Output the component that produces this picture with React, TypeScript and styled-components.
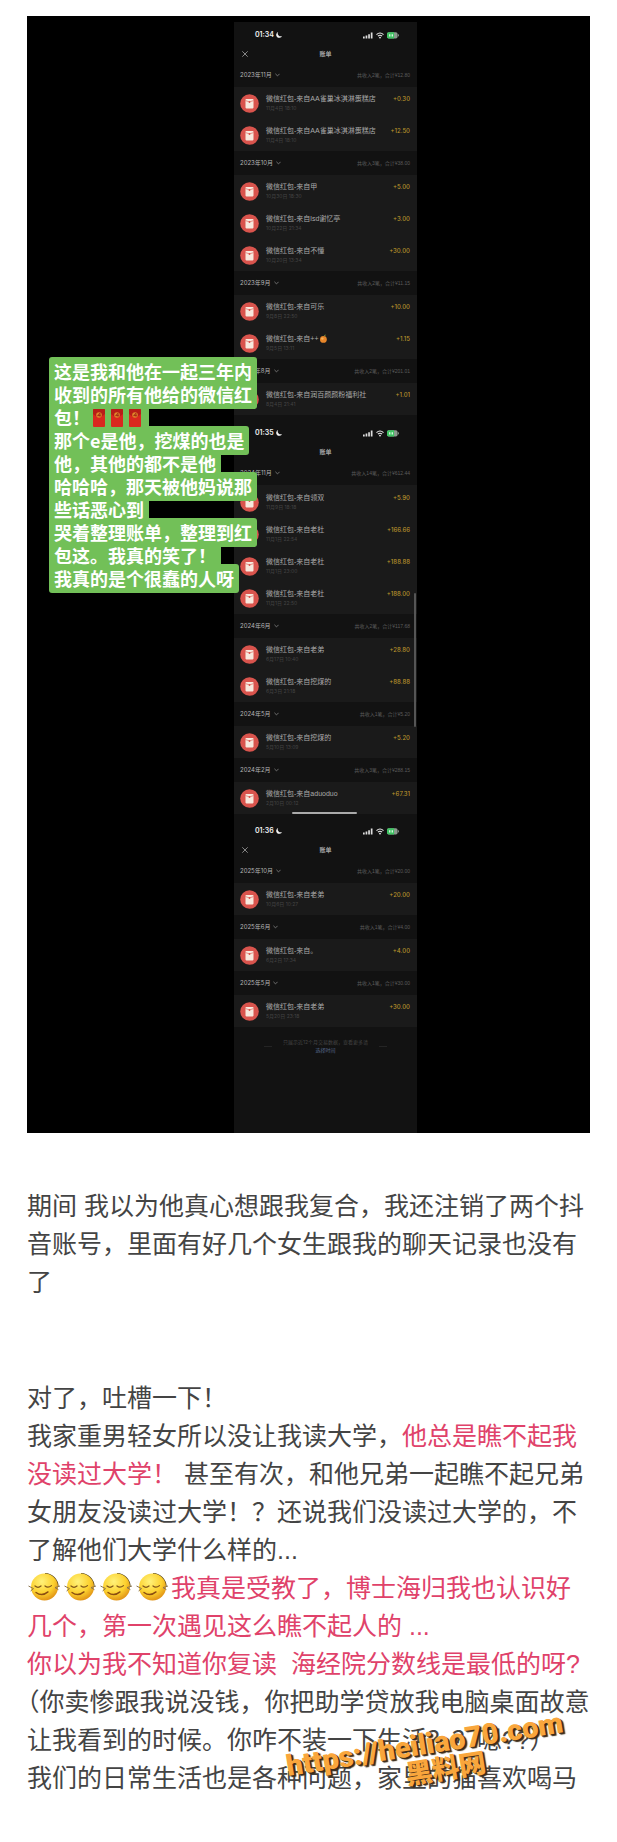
import React from "react";
import styled, { createGlobalStyle } from "styled-components";

const Global = createGlobalStyle`
  * { box-sizing: border-box; }
  html, body { margin: 0; background: #fff; }
  body { font-family: "Liberation Sans", "Noto Sans CJK SC", sans-serif; }
`;

const Page = styled.main`
  padding: 16px 25px 45px 27px;
`;

const Figure = styled.figure`
  position: relative;
  margin: 0 2px 54px 0;
  padding: 6px 173px 0 207px;
  background: #000;
`;

const Phone = styled.section<{ $bottom: number }>`
  position: relative;
  padding: 6px 0 ${(p) => p.$bottom}px;
  background: #121212;
  color: #a8a8a8;
  font-family: Inter, "Noto Sans CJK SC", sans-serif;
`;

const StatusBar = styled.div`
  display: flex;
  align-items: center;
  height: 14px;
  padding: 0 18px 0 21px;
  gap: 3px;
  color: #f2f2f2;
  font-size: 7px;
  font-weight: 600;
  line-height: 14px;
`;

const Moon = styled.svg`
  margin-right: auto;
  margin-left: -1px;
`;

const TitleBar = styled.div`
  display: grid;
  grid-template-columns: 8px 1fr 8px;
  align-items: center;
  height: 21px;
  padding: 2px 7px 0;
  font-size: 6px;
  font-weight: 700;
  line-height: 10px;
  text-align: center;
`;

const Close = styled.button`
  display: flex;
  width: 8px;
  height: 8px;
  padding: 1px;
  border: 0;
  background: none;
`;

const MonthHeader = styled.header`
  display: flex;
  align-items: center;
  justify-content: space-between;
  height: 24px;
  padding: 0 7px 0 6px;
`;

const MonthButton = styled.button`
  display: flex;
  align-items: center;
  gap: 3px;
  padding: 0;
  border: 0;
  background: none;
  color: #b4b4b4;
  font: inherit;
  font-size: 6px;
  line-height: 10px;
`;

const Summary = styled.span`
  color: #5c5c5c;
  font-family: "Liberation Sans", "Noto Sans CJK SC", sans-serif;
  font-size: 5px;
  line-height: 8px;
`;

const List = styled.ul<{ $pad: number }>`
  margin: 0;
  padding: ${(p) => p.$pad}px 0 0;
  list-style: none;
  background: #1a1a1a;
`;

const Item = styled.li`
  display: grid;
  grid-template-columns: 19px 1fr auto;
  column-gap: 7px;
  height: 32px;
  padding: 7px 7px 0 6px;
  white-space: nowrap;
`;

const ItemText = styled.div`
  display: flex;
  flex-direction: column;
  min-width: 0;
`;

const Name = styled.span`
  height: 10px;
  color: #aaa;
  font-family: "Liberation Sans", "Noto Sans CJK SC", sans-serif;
  font-size: 7px;
  line-height: 10px;
`;

const Time = styled.span`
  color: #444;
  font-size: 5px;
  line-height: 9px;
`;

const Amount = styled.span`
  color: #b8922c;
  font-size: 6px;
  font-weight: 500;
  line-height: 10px;
`;

const HomeBar = styled.div`
  position: absolute;
  bottom: 4px;
  left: 58px;
  width: 65px;
  height: 2px;
  border-radius: 1px;
  background: #aaa;
`;

const ScrollThumb = styled.div`
  position: absolute;
  top: 173px;
  right: 1px;
  width: 2px;
  height: 134px;
  border-radius: 1px;
  background: #555;
`;

const EndNote = styled.footer`
  display: grid;
  grid-template-columns: 8px auto 8px;
  justify-content: center;
  column-gap: 11px;
  padding-top: 11px;
  color: #444;
  font-size: 5px;
  line-height: 8px;
  text-align: center;

  &::before, &::after {
    content: "";
    height: 1px;
    margin-top: 8px;
    background: #242424;
  }
`;

const NoteLink = styled.a`
  display: block;
  color: #56688a;
  text-decoration: none;
`;

const Caption = styled.figcaption`
  position: absolute;
  top: 344px;
  left: 27px;
  isolation: isolate;
  color: #fff;
  font-family: "Noto Sans CJK SC", sans-serif;
  font-size: 18px;
  font-weight: 700;
  line-height: 23px;
  white-space: nowrap;
`;

const CaptionLine = styled.div`
  position: relative;
  display: flex;
  align-items: center;
  width: fit-content;
  height: 23px;

  &::before {
    content: "";
    position: absolute;
    z-index: -1;
    inset: -3px -5px;
    border-radius: 3px;
    background: #72c058;
  }
`;

const Envelope = styled.svg`
  margin: 0 3px;
`;

const Article = styled.article`
  position: relative;
  color: #444;
  font-size: 25px;
  line-height: 38px;
  text-spacing-trim: trim-start;
`;

const Paragraph = styled.p`
  margin: 0 0 78px;

  &:last-of-type { margin-bottom: 0; }
`;

const Accent = styled.strong`
  color: #e0426a;
  font-weight: 400;
`;

const Face = styled.svg`
  width: 36px;
  height: 30px;
  vertical-align: -5px;
`;

const Watermark = styled.div`
  position: absolute;
  right: 25px;
  bottom: 11px;
  display: flex;
  flex-direction: column;
  align-items: center;
  transform: rotate(-9deg);
  color: #f9a63c;
  font-family: Roboto, "Noto Sans CJK SC", sans-serif;
  font-size: 29px;
  font-weight: 900;
  line-height: 28px;
  text-shadow: 1px 1px 0 #3c2c18, 2px 2px 1px #3c2c18;
  white-space: nowrap;
`;

const SiteName = styled.span`
  padding-left: 34px;
  font-size: 27px;
`;

type Entry = { name: string; time: string; amount: string; fruit?: boolean };
type Month = { label: string; count: number; total: string; entries: Entry[]; pad?: number };

const aa = "AA雀巢冰淇淋蛋糕店";

const first: Month[] = [
  { label: "2023年11月", count: 2, total: "12.80", entries: [
    { name: aa, time: "11月4日 18:10", amount: "0.30" },
    { name: aa, time: "11月4日 18:10", amount: "12.50" },
  ] },
  { label: "2023年10月", count: 3, total: "38.00", entries: [
    { name: "甲", time: "10月30日 18:30", amount: "5.00" },
    { name: "lsd谢忆亭", time: "10月22日 21:34", amount: "3.00" },
    { name: "不懂", time: "10月20日 13:34", amount: "30.00" },
  ] },
  { label: "2023年9月", count: 2, total: "11.15", entries: [
    { name: "可乐", time: "9月8日 22:50", amount: "10.00" },
    { name: "++", time: "9月5日 13:11", amount: "1.15", fruit: true },
  ] },
  { label: "2023年8月", count: 2, total: "201.01", entries: [
    { name: "润百颜颜粉福利社", time: "8月4日 21:41", amount: "1.01" },
  ] },
];

const second: Month[] = [
  { label: "2024年11月", count: 14, total: "612.44", pad: 1, entries: [
    { name: "领双", time: "11月9日 18:18", amount: "5.90" },
    { name: "老杜", time: "11月1日 22:54", amount: "166.66" },
    { name: "老杜", time: "11月1日 23:00", amount: "188.88" },
    { name: "老杜", time: "11月1日 22:50", amount: "188.00" },
  ] },
  { label: "2024年6月", count: 2, total: "117.68", entries: [
    { name: "老弟", time: "6月17日 10:40", amount: "28.80" },
    { name: "挖煤的", time: "6月3日 21:18", amount: "88.88" },
  ] },
  { label: "2024年5月", count: 1, total: "5.20", entries: [
    { name: "挖煤的", time: "5月10日 13:09", amount: "5.20" },
  ] },
  { label: "2024年2月", count: 3, total: "288.15", entries: [
    { name: "aduoduo", time: "2月10日 00:12", amount: "67.31" },
  ] },
];

const third: Month[] = [
  { label: "2025年10月", count: 1, total: "20.00", entries: [
    { name: "老弟", time: "10月6日 10:27", amount: "20.00" },
  ] },
  { label: "2025年6月", count: 1, total: "4.00", entries: [
    { name: "。", time: "6月2日 17:34", amount: "4.00" },
  ] },
  { label: "2025年5月", count: 1, total: "30.00", entries: [
    { name: "老弟", time: "5月20日 23:18", amount: "30.00" },
  ] },
];

const PacketIcon = () => (
  <svg width="19" height="19" viewBox="0 0 19 19" aria-hidden="true">
    <circle cx="9.5" cy="9.5" r="9.3" fill="#d9544d" />
    <rect x="5.5" y="5" width="8" height="9.4" rx="0.8" fill="#f7e9de" />
    <path d="M5.5 6.6Q9.5 9.2 13.5 6.6" fill="none" stroke="#d9544d" strokeWidth="0.6" />
    <circle cx="9.5" cy="8" r="0.9" fill="#d9544d" />
  </svg>
);

const FruitIcon = styled.svg`
  vertical-align: -2px;
`;

const Fruit = () => (
  <FruitIcon width="9" height="9" viewBox="0 0 9 9" aria-hidden="true">
    <circle cx="4.4" cy="5.4" r="3.4" fill="#e8862a" />
    <circle cx="3.4" cy="4.6" r="1.2" fill="#f6b35a" />
    <path d="M4.6 2.4Q5 .6 7 .6Q6.8 2.4 4.6 2.4Z" fill="#6f8a3a" />
  </FruitIcon>
);

const Status = ({ time }: { time: string }) => (
  <StatusBar>
    <span>{time}</span>
    <Moon width="6" height="6" viewBox="0 0 6 6" aria-hidden="true">
      <path d="M2.2 0A3 3 0 1 0 6 3.9A2.8 2.8 0 0 1 2.2 0Z" fill="#f2f2f2" />
    </Moon>
    <svg width="10" height="7" viewBox="0 0 10 7" aria-hidden="true">
      <path d="M0 4.6h1.7V6.6H0zM2.6 3.6h1.7v3H2.6zM5.2 2.2h1.7v4.4H5.2zM7.8.6h1.7v6H7.8z" fill="#ddd" />
    </svg>
    <svg width="8" height="7" viewBox="0 0 8 7" aria-hidden="true">
      <path d="M.5 2.6Q4-.6 7.5 2.6M1.9 4.2Q4 2.4 6.1 4.2" fill="none" stroke="#eee" strokeWidth="1.1" />
      <circle cx="4" cy="5.6" r="0.9" fill="#eee" />
    </svg>
    <svg width="12" height="7" viewBox="0 0 12 7" aria-hidden="true">
      <rect x="0" y="0.3" width="10.6" height="6.2" rx="1.8" fill="#8b9a8e" />
      <path d="M1.8.3H7v6.2H1.8A1.8 1.8 0 0 1 0 4.7V2.1A1.8 1.8 0 0 1 1.8.3Z" fill="#3fc463" />
      <path d="M2 2.2h1.4v2.4H2zM4.6 2.2H6v2.4H4.6z" fill="#d8f5df" />
      <rect x="11" y="2.2" width="0.9" height="2.2" rx="0.4" fill="#8b9a8e" />
    </svg>
  </StatusBar>
);

const Title = ({ closable }: { closable?: boolean }) => (
  <TitleBar>
    {closable ? (
      <Close aria-label="关闭">
        <svg width="6" height="6" viewBox="0 0 6 6">
          <path d="M.3.3l5.4 5.4M5.7.3L.3 5.7" stroke="#a5a5a5" strokeWidth="0.8" />
        </svg>
      </Close>
    ) : (
      <span />
    )}
    <span>账单</span>
  </TitleBar>
);

const Months = ({ months }: { months: Month[] }) => (
  <>
    {months.map((m) => (
      <section key={m.label}>
        <MonthHeader>
          <MonthButton>
            {m.label}
            <svg width="5" height="4" viewBox="0 0 5 4" aria-hidden="true">
              <path d="M.4.8l2.1 2.1L4.6.8" fill="none" stroke="#888" strokeWidth="0.8" />
            </svg>
          </MonthButton>
          <Summary>共收入{m.count}笔，合计¥{m.total}</Summary>
        </MonthHeader>
        <List $pad={m.pad ?? 0}>
          {m.entries.map((e, i) => (
            <Item key={i}>
              <PacketIcon />
              <ItemText>
                <Name>微信红包-来自{e.name}{e.fruit && <Fruit />}</Name>
                <Time>{e.time}</Time>
              </ItemText>
              <Amount>+{e.amount}</Amount>
            </Item>
          ))}
        </List>
      </section>
    ))}
  </>
);

const RedEnvelope = () => (
  <Envelope width="12" height="18" viewBox="0 0 12 18" aria-hidden="true">
    <rect width="12" height="18" rx="1" fill="#d9281f" />
    <path d="M0 1Q0 0 1 0H11Q12 0 12 1V5Q6 11 0 5Z" fill="#b81d17" />
    <circle cx="6" cy="6" r="2.8" fill="#e0862a" />
    <path d="M7 4.2v3.4M7 4.4L4.6 6.6h3" fill="none" stroke="#9c1a12" strokeWidth="0.8" />
  </Envelope>
);

const CalmFace = () => (
  <Face viewBox="0 0 36 30" aria-hidden="true">
    <defs>
      <radialGradient id="skin" cx="0.4" cy="0.3" r="0.75">
        <stop offset="0" stopColor="#fff27a" />
        <stop offset="0.6" stopColor="#fcd02e" />
        <stop offset="1" stopColor="#dd8a12" />
      </radialGradient>
    </defs>
    <path d="M18 1.6A13.4 13.4 0 0 1 31 15" fill="none" stroke="#54431c" strokeWidth="1.4" />
    <circle cx="17.5" cy="15" r="13.5" fill="url(#skin)" />
    <path d="M1.5 14l5 2.6L3.6 19M33 14l-5 1.6 3.4 2" fill="none" stroke="#8b7550" strokeWidth="1" />
    <path d="M8 14q3 2.6 6 0M18 14q3 2.6 6.5-.4" fill="none" stroke="#80551a" strokeWidth="1.2" strokeLinecap="round" />
    <path d="M9 20.5q6 4.4 12-.6" fill="none" stroke="#8a4d12" strokeWidth="1.4" strokeLinecap="round" />
  </Face>
);

export default function App() {
  return (
    <Page>
      <Global />
      <Figure>
        <Phone $bottom={5}>
          <Status time="01:34" />
          <Title closable />
          <Months months={first} />
        </Phone>
        <Phone $bottom={4}>
          <Status time="01:35" />
          <Title />
          <Months months={second} />
          <ScrollThumb />
          <HomeBar />
        </Phone>
        <Phone $bottom={79}>
          <Status time="01:36" />
          <Title closable />
          <Months months={third} />
          <EndNote>
            <span>
              只展示近12个月交易数据，查看更多请
              <NoteLink href="#time">选择时间</NoteLink>
            </span>
          </EndNote>
        </Phone>
        <Caption>
          <CaptionLine>这是我和他在一起三年内</CaptionLine>
          <CaptionLine>收到的所有他给的微信红</CaptionLine>
          <CaptionLine>包！<RedEnvelope /><RedEnvelope /><RedEnvelope /></CaptionLine>
          <CaptionLine>那个e是他，挖煤的也是</CaptionLine>
          <CaptionLine>他，其他的都不是他</CaptionLine>
          <CaptionLine>哈哈哈，那天被他妈说那</CaptionLine>
          <CaptionLine>些话恶心到</CaptionLine>
          <CaptionLine>哭着整理账单，整理到红</CaptionLine>
          <CaptionLine>包这。我真的笑了！</CaptionLine>
          <CaptionLine>我真的是个很蠢的人呀</CaptionLine>
        </Caption>
      </Figure>
      <Article>
        <Paragraph>
          期间 我以为他真心想跟我复合，我还注销了两个抖音账号，里面有好几个女生跟我的聊天记录也没有了
        </Paragraph>
        <Paragraph>
          对了，吐槽一下！<br />
          我家重男轻女所以没让我读大学，<Accent>他总是瞧不起我没读过大学！</Accent> 甚至有次，和他兄弟一起瞧不起兄弟女朋友没读过大学！？还说我们没读过大学的，不了解他们大学什么样的...<br />
          <CalmFace /><CalmFace /><CalmFace /><CalmFace />
          <Accent>
            我真是受教了，博士海归我也认识好几个，第一次遇见这么瞧不起人的 ...<br />
            你以为我不知道你复读&nbsp; 海经院分数线是最低的呀?
          </Accent><br />
          （你卖惨跟我说没钱，你把助学贷放我电脑桌面故意<br />
          让我看到的时候。你咋不装一下生活？？嗯??）<br />
          我们的日常生活也是各种问题，家里的猫喜欢喝马
        </Paragraph>
        <Watermark>
          <span>https://heiliao70.com</span>
          <SiteName>黑料网</SiteName>
        </Watermark>
      </Article>
    </Page>
  );
}
